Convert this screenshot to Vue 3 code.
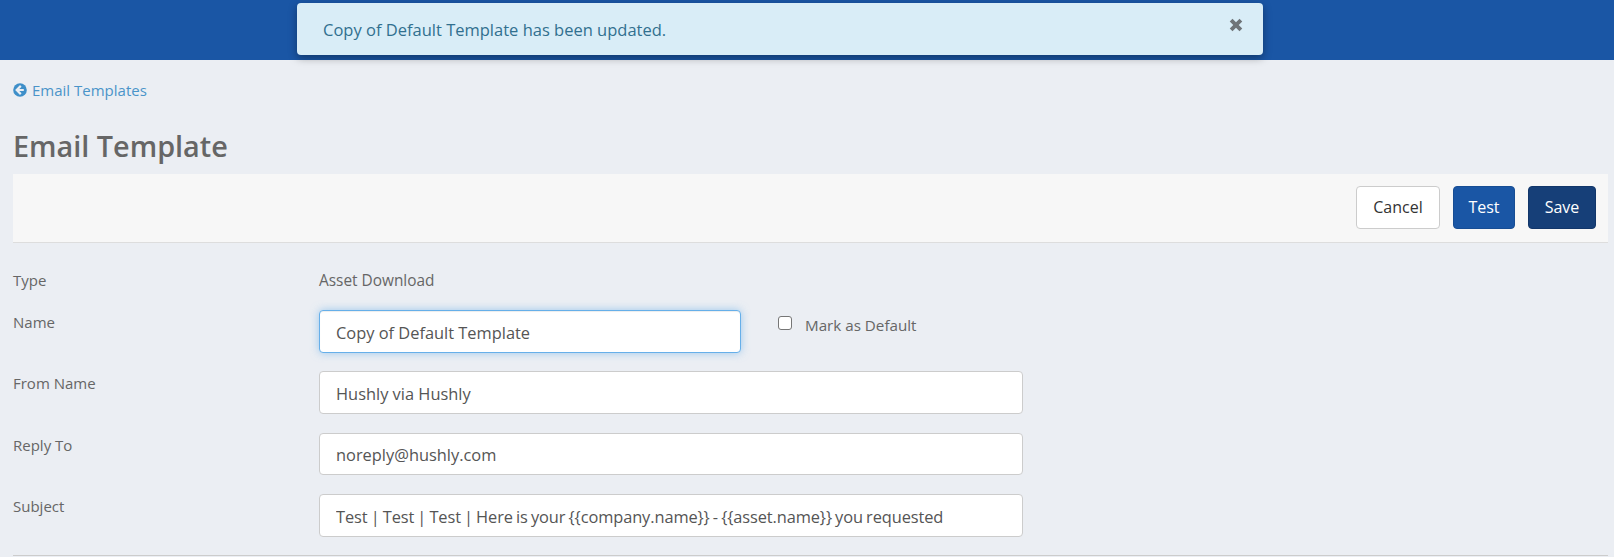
<script setup>
const fields = [
  { label: 'From Name', value: 'Hushly via Hushly', cls: 'from' },
  { label: 'Reply To', value: 'noreply@hushly.com', cls: 'reply' },
  { label: 'Subject', value: 'Test | Test | Test | Here is your {{company.name}} - {{asset.name}} you requested', cls: 'subject' }
]
</script>

<template>
  <div class="page">
    <header class="topbar"></header>
    <div class="alert">
      <span class="alert-text">Copy of Default Template has been updated.</span>
      <svg class="close" width="20" height="20" viewBox="0 0 16 16"><path d="M3 5.2 5.2 3 8 5.8 10.8 3 13 5.2 10.2 8 13 10.8 10.8 13 8 10.2 5.2 13 3 10.8 5.8 8Z" fill="#6f7478"/></svg>
    </div>
    <main class="content">
      <a class="back">
        <svg width="14" height="14" viewBox="0 0 14 14"><circle cx="7" cy="7" r="6.8" fill="#3e8fc9"/><path d="M7.8 2.9 3.7 7l4.1 4.1M4.2 7h6.6" fill="none" stroke="#ebeef3" stroke-width="2.2"/></svg>
        Email Templates
      </a>
      <h1>Email Template</h1>
      <div class="toolbar">
        <button class="btn cancel">Cancel</button>
        <button class="btn test">Test</button>
        <button class="btn save">Save</button>
      </div>
      <div class="row type">
        <div class="label">Type</div>
        <div class="static">Asset Download</div>
      </div>
      <div class="row name">
        <div class="label">Name</div>
        <input class="input focused" value="Copy of Default Template" />
        <label class="check"><span class="box"></span>Mark as Default</label>
      </div>
      <div v-for="f in fields" :key="f.label" class="row field" :class="f.cls">
        <div class="label">{{ f.label }}</div>
        <input class="input wide" :value="f.value" />
      </div>
      <div class="rule"></div>
    </main>
  </div>
</template>

<style>
html, body { margin: 0; background: #ebeef3; }
</style>

<style scoped>
.page {
  position: relative;
  height: 557px;
  overflow: hidden;
  background: #ebeef3;
  font-family: "Open Sans", "Noto Sans", sans-serif;
  color: #666;
}
.topbar { height: 60px; background: #1a56a5; }
.alert {
  position: absolute;
  left: 297px;
  top: 3px;
  width: 966px;
  height: 52px;
  box-sizing: border-box;
  padding: 0 26px;
  display: flex;
  align-items: center;
  justify-content: space-between;
  background: #d9edf7;
  color: #31708f;
  font-size: 16.5px;
  border-radius: 4px;
  box-shadow: 0 3px 8px rgba(0, 0, 0, .35);
}
.alert-text { padding-top: 1px; }
.close { margin-right: -9px; margin-top: -8px; }
.content { padding: 0 6px 0 13px; }
.back {
  display: flex;
  align-items: center;
  gap: 5px;
  height: 22px;
  margin-top: 19px;
  color: #4a94c9;
  font-size: 15px;
}
h1 {
  margin: 23px 0 0;
  height: 50px;
  font-size: 28.8px;
  line-height: 44px;
  font-weight: 600;
  color: #666;
}
.toolbar {
  height: 69px;
  box-sizing: border-box;
  display: flex;
  align-items: center;
  justify-content: flex-end;
  gap: 13px;
  padding: 0 12px 2px 0;
  background: #f7f7f7;
  border-bottom: 1px solid #ddd;
}
.btn {
  height: 43px;
  box-sizing: border-box;
  padding: 0 14px;
  font: 16px "Open Sans", "Noto Sans", sans-serif;
  border-radius: 4px;
  border: 1px solid transparent;
}
.cancel { width: 84px; background: #fff; border-color: #ccc; color: #333; }
.test { width: 62px; background: #1a56a5; border-color: #174d94; color: #fff; }
.save { width: 68px; background: #163f78; border-color: #12366a; color: #fff; }
.row { display: flex; align-items: flex-start; }
.label { width: 306px; flex: none; font-size: 15px; line-height: 20px; }
.type { margin-top: 18px; height: 38px; align-items: center; }
.static { font-size: 15.4px; }
.name { margin-top: 11px; }
.name .label { padding-top: 2px; }
.field { margin-top: 18px; }
.field .label { padding-top: 2px; }
.reply { margin-top: 19px; }
.subject { margin-top: 19px; }
.input {
  height: 43px;
  box-sizing: border-box;
  padding: 1px 16px 0;
  border: 1px solid #ccc;
  border-radius: 4px;
  background: #fff;
  color: #555;
  font: 16.4px "Open Sans", "Noto Sans", sans-serif;
  outline: none;
}
.reply .input { height: 42px; }
.subject .input { word-spacing: -1px; letter-spacing: -.1px; }
.focused {
  width: 422px;
  border-color: #66afe9;
  box-shadow: inset 0 1px 1px rgba(0, 0, 0, .075), 0 0 8px rgba(102, 175, 233, .6);
}
.wide { width: 704px; }
.check {
  display: flex;
  align-items: center;
  margin: 5px 0 0 37px;
  height: 20px;
  font-size: 15.2px;
  color: #666;
}
.box {
  width: 14px;
  height: 14px;
  margin-right: 13px;
  margin-top: -4px;
  box-sizing: border-box;
  border: 1px solid #767676;
  border-radius: 3px;
  background: #fff;
}
.rule { margin: 18px 0 0 0; border-top: 1px solid #ccc; }
</style>
